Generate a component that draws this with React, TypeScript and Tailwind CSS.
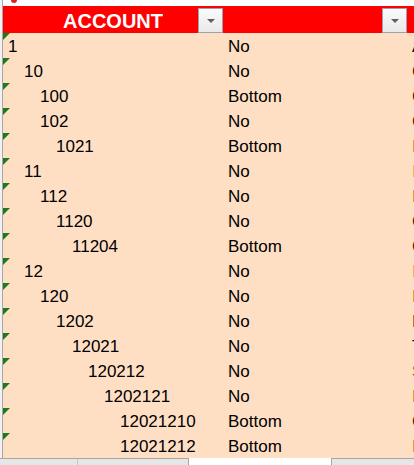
import React from "react";

interface Row {
  account: string;
  level: number;
  flag: string;
  extra: string;
  extraColor: string;
}

const rows: Row[] = [
  { account: "1", level: 0, flag: "No", extra: "A", extraColor: "text-black" },
  { account: "10", level: 1, flag: "No", extra: "C", extraColor: "text-[#4a2208]" },
  { account: "100", level: 2, flag: "Bottom", extra: "C", extraColor: "text-[#4a2208]" },
  { account: "102", level: 2, flag: "No", extra: "C", extraColor: "text-[#4a2208]" },
  { account: "1021", level: 3, flag: "Bottom", extra: "L", extraColor: "text-[#c0703a]" },
  { account: "11", level: 1, flag: "No", extra: "L", extraColor: "text-[#e09a60]" },
  { account: "112", level: 2, flag: "No", extra: "L", extraColor: "text-[#c0703a]" },
  { account: "1120", level: 3, flag: "No", extra: "C", extraColor: "text-[#4a2208]" },
  { account: "11204", level: 4, flag: "Bottom", extra: "C", extraColor: "text-[#4a2208]" },
  { account: "12", level: 1, flag: "No", extra: "L", extraColor: "text-[#e09a60]" },
  { account: "120", level: 2, flag: "No", extra: "L", extraColor: "text-[#c0703a]" },
  { account: "1202", level: 3, flag: "No", extra: "L", extraColor: "text-[#6a3010]" },
  { account: "12021", level: 4, flag: "No", extra: "T", extraColor: "text-black" },
  { account: "120212", level: 5, flag: "No", extra: "S", extraColor: "text-[#8a4a20]" },
  { account: "1202121", level: 6, flag: "No", extra: "L", extraColor: "text-[#c0703a]" },
  { account: "12021210", level: 7, flag: "Bottom", extra: "C", extraColor: "text-[#4a2208]" },
  { account: "12021212", level: 7, flag: "Bottom", extra: "L", extraColor: "text-[#c0703a]" },
];

const indents = [
  "pl-[5px]",
  "pl-[21px]",
  "pl-[37px]",
  "pl-[53px]",
  "pl-[69px]",
  "pl-[85px]",
  "pl-[101px]",
  "pl-[117px]",
];

const FilterButton: React.FC = () => (
  <div className="absolute right-0 bottom-0 w-[25px] h-[25px] border border-[#9aa3ad] bg-gradient-to-b from-[#fbfbfb] to-[#e9e9e9] flex items-center justify-center">
    <svg width="10" height="6" viewBox="0 0 10 6">
      <polygon points="1,1 9,1 5,5" fill="#5f5f5f" />
    </svg>
  </div>
);

const App: React.FC = () => {
  return (
    <div className="w-[414px] h-[465px] bg-white overflow-hidden flex flex-col font-['Liberation_Sans',Arial,sans-serif]">
      <div className="h-[6px] flex shrink-0">
        <div className="w-[2px] bg-[#f2f2f2]" />
        <div className="border-l border-[#a6a6a6] flex-1 relative">
          <div className="ml-[8px] w-[6px] h-[3px] bg-[#e02020] rounded-b-full" />
        </div>
      </div>

      <div className="flex flex-1 min-h-0">
        <div className="w-[2px] bg-[#f2f2f2]" />
        <div className="flex-1 border-l border-[#a6a6a6] overflow-hidden">
          <div className="grid grid-cols-[220px_184px_1fr] h-[27px] bg-[#ff0000]">
            <div className="relative h-[27px] overflow-hidden">
              <div className="text-center text-white font-bold text-[20px] leading-[31px] h-[27px] overflow-hidden">
                ACCOUNT
              </div>
              <FilterButton />
            </div>
            <div className="relative h-[27px]">
              <FilterButton />
            </div>
            <div />
          </div>

          <div className="bg-[#ffdfc4]">
            {rows.map((r) => (
              <div
                key={r.account}
                className="grid grid-cols-[220px_184px_1fr] h-[25px] text-[17px] text-black"
              >
                <div className={`relative h-[25px] leading-[27px] overflow-hidden whitespace-nowrap ${indents[r.level]}`}>
                  <svg className="absolute left-0 top-0" width="7" height="7" viewBox="0 0 7 7">
                    <polygon points="0,0 7,0 0,7" fill="#1c7a1c" />
                  </svg>
                  {r.account}
                </div>
                <div className="h-[25px] leading-[27px] pl-[5px] overflow-hidden whitespace-nowrap">
                  {r.flag}
                </div>
                <div className={`h-[25px] leading-[27px] pl-[5px] overflow-hidden whitespace-nowrap ${r.extraColor}`}>
                  {r.extra}
                </div>
              </div>
            ))}
          </div>
        </div>
      </div>

      <div className="h-[7px] shrink-0 flex border-t border-[#a6a6a6] bg-[#e6e6e6]">
        <div className="w-[78px] border-r border-[#c8c8c8]" />
        <div className="w-[111px] border-r border-[#a6a6a6]" />
        <div className="w-[143px] bg-white -mt-px border-r border-[#a6a6a6]" />
        <div className="flex-1" />
      </div>
    </div>
  );
};

export default App;
